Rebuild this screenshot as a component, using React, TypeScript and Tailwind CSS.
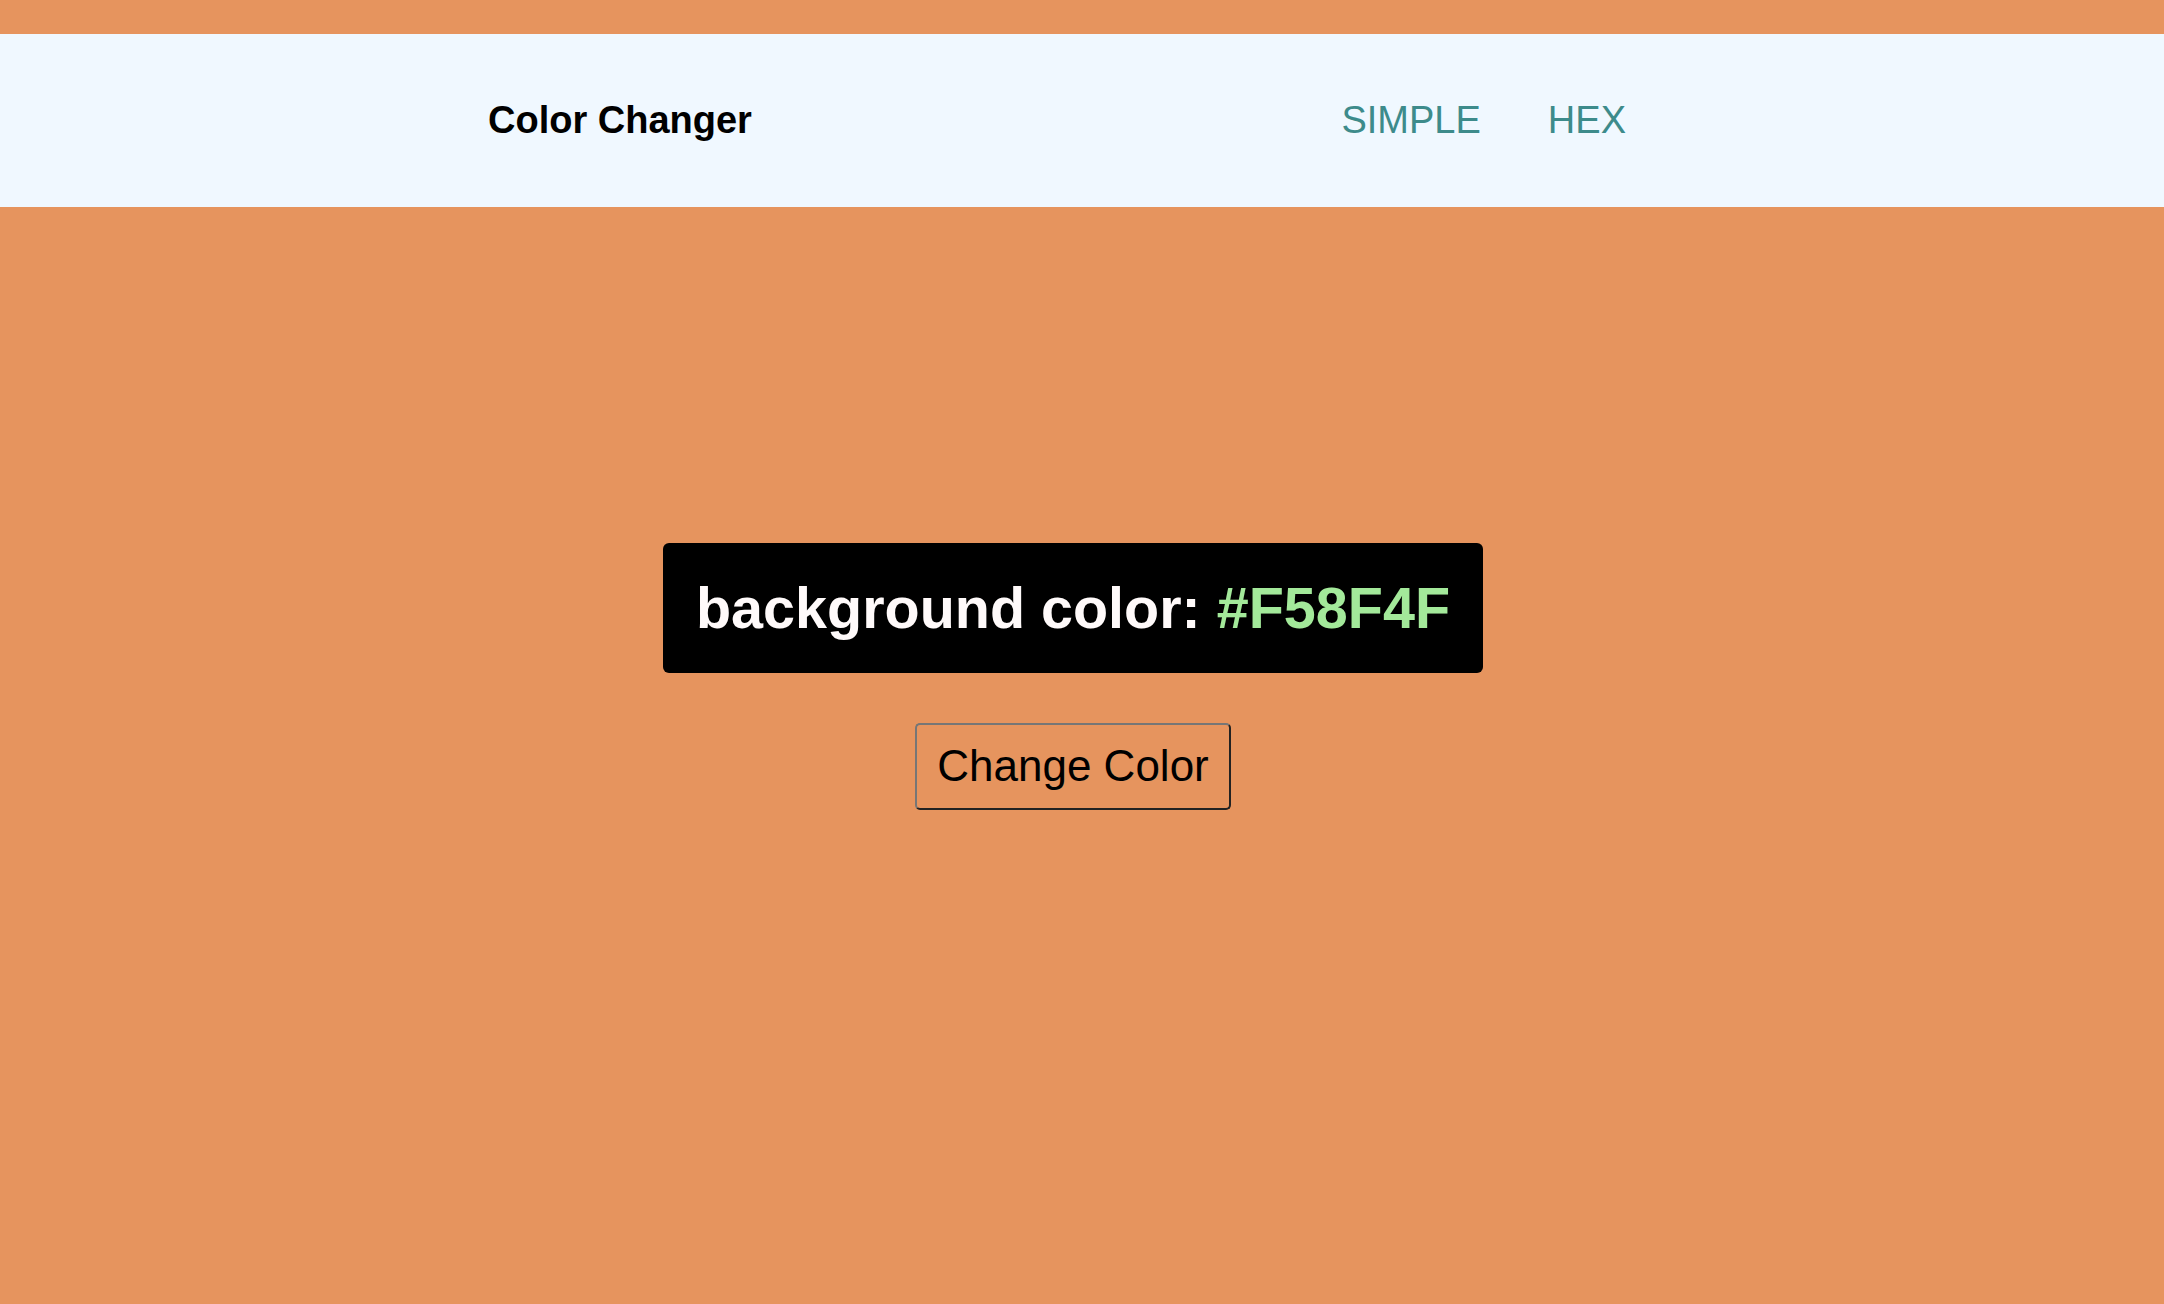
import { useState } from "react";

const colors = ["#F58F4F", "#4FA3F5", "#8F4FF5", "#F54F8F", "#4FF58F"];

export default function App() {
  const [index, setIndex] = useState(0);
  const color = colors[index];

  const changeColor = () => {
    setIndex((index + 1) % colors.length);
  };

  return (
    <div className="min-h-screen bg-[#e6945e] pt-[34px] font-['Liberation_Sans',Arial,sans-serif]">
      <nav className="h-[173px] bg-[#f0f8ff] flex items-center justify-between pl-[488px] pr-[538px]">
        <h1 className="text-[38px] font-bold text-black">Color Changer</h1>
        <div className="flex items-center gap-[67px] text-[38px] text-[#3d8b8b]">
          <a href="#">SIMPLE</a>
          <a href="#">HEX</a>
        </div>
      </nav>

      <main className="flex flex-col items-center pt-[336px] pr-[18px]">
        <div className="h-[130px] flex items-center px-[33px] bg-black rounded-[6px] text-[57.5px] font-bold text-[#fffafa]">
          background color:&nbsp;<span className="text-[#a3e99a]">{color}</span>
        </div>
        <button
          onClick={changeColor}
          className="mt-[50px] px-[20px] py-[16px] text-[44px] leading-[1.15] text-black bg-transparent rounded-[5px] border-2 border-t-[#767676] border-l-[#767676] border-b-[#222222] border-r-[#222222]"
        >
          Change Color
        </button>
      </main>
    </div>
  );
}
